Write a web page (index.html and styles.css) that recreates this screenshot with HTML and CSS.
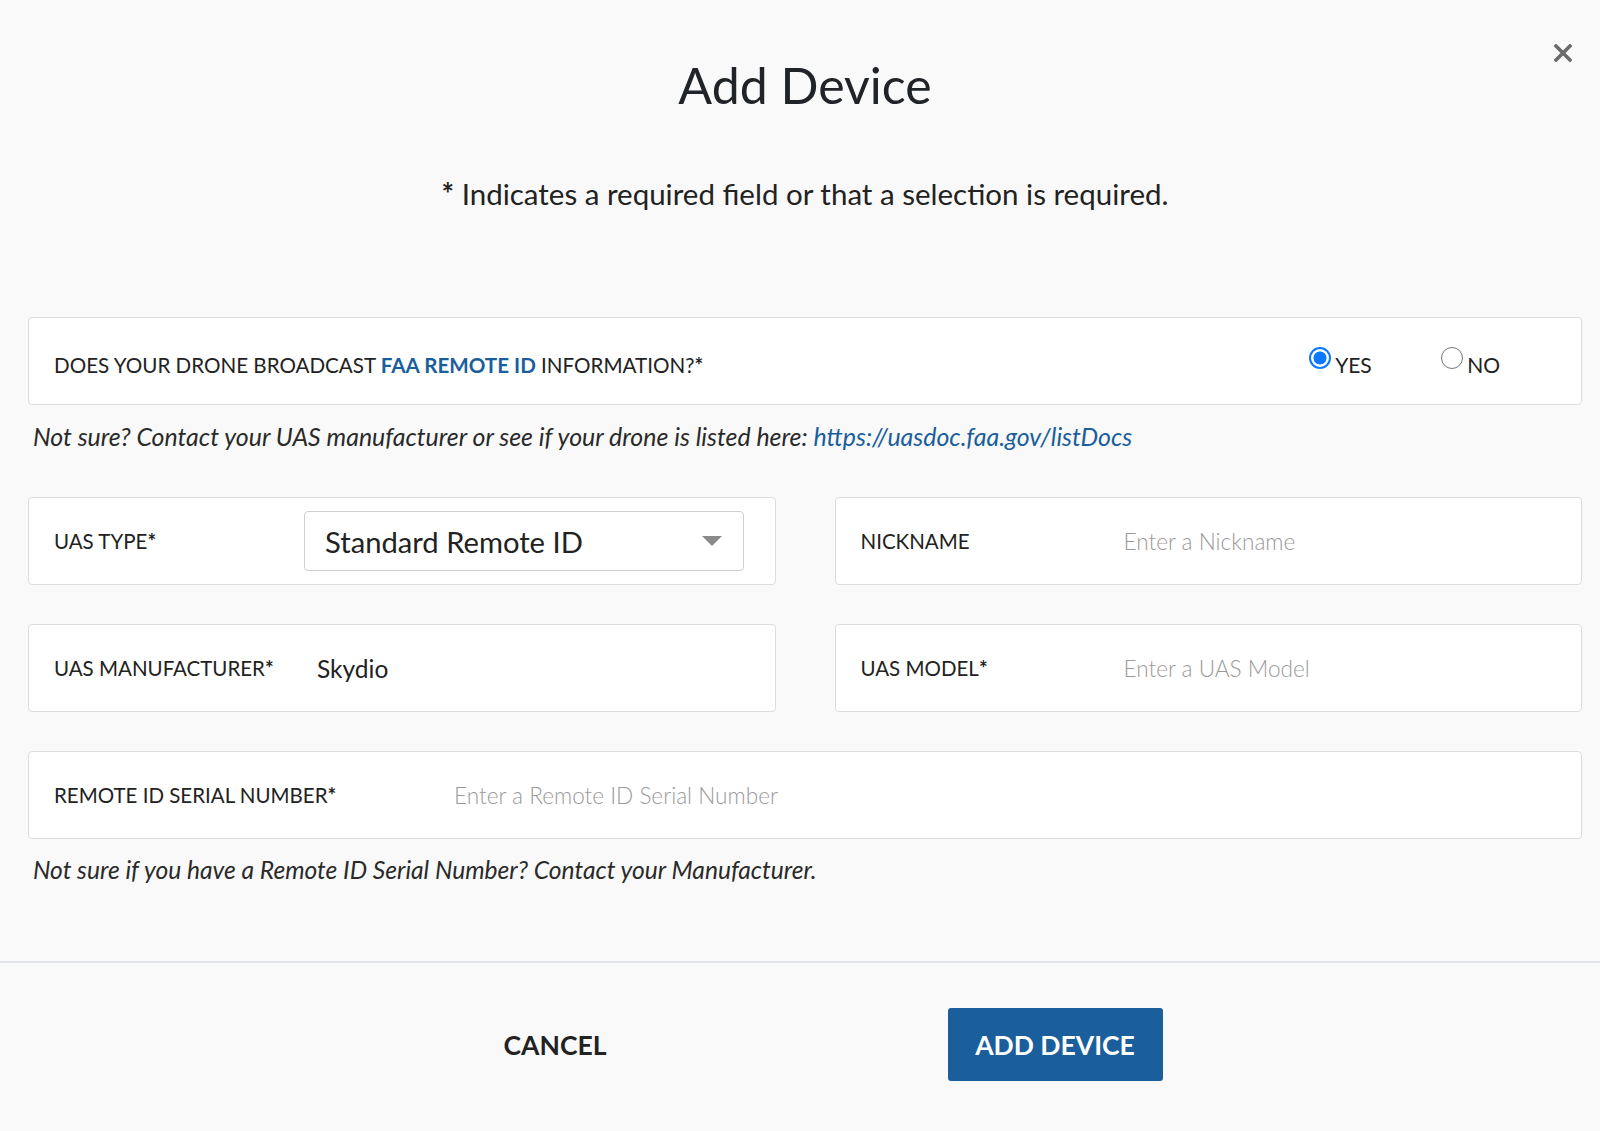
FILE: index.html
```html
<!DOCTYPE html>
<html lang="en">
<head>
<meta charset="utf-8">
<title>Add Device</title>
<link rel="stylesheet" href="styles.css">
</head>
<body>
<div class="modal">
  <button class="close" aria-label="Close">
    <svg width="18" height="18" viewBox="0 0 18 18"><path d="M2 2 L16 16 M16 2 L2 16" stroke="#6b6b6b" stroke-width="3.6" stroke-linecap="square"/></svg>
  </button>
  <div class="content">
    <h1 class="title">Add Device</h1>
    <p class="note"><b class="req">*</b> Indicates a required field or that a selection is required.</p>

    <div class="card card-question">
      <span class="label label-question">DOES YOUR DRONE BROADCAST <a class="strong-link" href="#">FAA REMOTE ID</a> INFORMATION?<b class="req">*</b></span>
      <div class="radios">
        <label class="radio"><input type="radio" name="rid" checked><span>YES</span></label>
        <label class="radio radio-no"><input type="radio" name="rid"><span>NO</span></label>
      </div>
    </div>
    <p class="help">Not sure? Contact your UAS manufacturer or see if your drone is listed here: <a class="link" href="#">https://uasdoc.faa.gov/listDocs</a></p>

    <div class="grid">
      <div class="card">
        <span class="label label-half">UAS TYPE<b class="req">*</b></span>
        <div class="select">
          <span>Standard Remote ID</span>
          <svg class="caret" width="20" height="10" viewBox="0 0 20 10"><path d="M0 0 H20 L10 10 Z" fill="#8a8a8a"/></svg>
        </div>
      </div>
      <div class="card">
        <span class="label label-half">NICKNAME</span>
        <span class="value placeholder">Enter a Nickname</span>
      </div>
      <div class="card">
        <span class="label label-half">UAS MANUFACTURER<b class="req">*</b></span>
        <span class="value">Skydio</span>
      </div>
      <div class="card">
        <span class="label label-half">UAS MODEL<b class="req">*</b></span>
        <span class="value placeholder">Enter a UAS Model</span>
      </div>
    </div>

    <div class="card card-full">
      <span class="label label-wide">REMOTE ID SERIAL NUMBER<b class="req">*</b></span>
      <span class="value placeholder">Enter a Remote ID Serial Number</span>
    </div>
    <p class="help help-last">Not sure if you have a Remote ID Serial Number? Contact your Manufacturer.</p>
  </div>

  <div class="divider"></div>

  <div class="footer">
    <button class="btn btn-cancel">CANCEL</button>
    <button class="btn btn-primary">ADD DEVICE</button>
  </div>
</div>
</body>
</html>
```
FILE: styles.css
```css
* { box-sizing: border-box; }
html, body {
  margin: 0;
  padding: 0;
  background: #f9f9f9;
}
body {
  font-family: Lato, "Open Sans", Arial, sans-serif;
  color: #222;
}
.modal {
  position: relative;
  min-height: 1131px;
}
.close {
  position: absolute;
  top: 44px;
  left: 1554px;
  background: none;
  border: 0;
  padding: 0;
  width: 18px;
  height: 18px;
  cursor: pointer;
}
.close svg { display: block; }
.content {
  padding: 0 18px 0 28px;
}
.title {
  margin: 0;
  padding-top: 55px;
  font-size: 50px;
  line-height: 60px;
  font-weight: 400;
  text-align: center;
  color: #202328;
}
.note {
  margin: 61px 0 0;
  font-size: 29.5px;
  line-height: 36px;
  text-align: center;
  color: #222;
}
.req { font-weight: 700; }
.card {
  background: #fff;
  border: 1px solid #dcdcdc;
  border-radius: 4px;
  height: 88px;
  display: flex;
  align-items: center;
  padding: 0 31px 0 25px;
}
.card-question {
  margin-top: 105px;
  justify-content: space-between;
  padding-right: 81px;
}
.label {
  font-size: 20.5px;
  color: #222;
  flex: none;
}
.label-question {
  font-size: 20.6px;
  padding-top: 7px;
}
.label-half { width: 250px; }
.label-wide { width: 387px; }
.strong-link {
  color: #1a5e9c;
  font-weight: 700;
  text-decoration: none;
}
.radios {
  display: flex;
  align-items: center;
}
.radio {
  display: flex;
  align-items: center;
  font-size: 21px;
  width: 132px;
}
.radio-no { width: auto; }
.radio input {
  appearance: none;
  -webkit-appearance: none;
  margin: 0 4px 6px 0;
  width: 22px;
  height: 22px;
  border-radius: 50%;
  border: 1.6px solid #767676;
  background: #fff;
  flex: none;
}
.radio input:checked {
  border: 2.5px solid #0b78ff;
  background: radial-gradient(circle, #0b78ff 0 6.2px, #fff 6.8px);
}
.radio span { padding-top: 6px; color: #222; }
.help {
  margin: 16px 0 0;
  padding-left: 5px;
  font-size: 24.9px;
  line-height: 30px;
  font-style: italic;
  color: #2a2a2a;
}
.help-last { font-size: 24.6px; }
.link {
  color: #1a5e9c;
  text-decoration: none;
}
.grid {
  margin-top: 46px;
  display: grid;
  grid-template-columns: 1fr 1fr;
  column-gap: 59px;
  row-gap: 39px;
}
.value {
  font-size: 24.5px;
  padding-left: 13px;
  color: #222;
}
.placeholder {
  color: #9a9a9a;
  font-size: 22.6px;
  font-weight: 300;
}
.select {
  flex: 1;
  height: 60px;
  border: 1px solid #cfcfcf;
  border-radius: 4px;
  display: flex;
  align-items: center;
  justify-content: space-between;
  padding: 0 21px 0 20px;
  font-size: 29.2px;
  color: #222;
}
.caret { display: block; }
.card-full { margin-top: 39px; }
.divider {
  margin-top: 76px;
  height: 2px;
  background: #dfe2e6;
}
.footer {
  padding: 45px 18px 0 28px;
  display: flex;
  justify-content: center;
  gap: 285px;
}
.btn {
  width: 215px;
  height: 73px;
  border: 0;
  border-radius: 3px;
  font-family: Lato, "Open Sans", Arial, sans-serif;
  font-size: 26.5px;
  font-weight: 700;
  cursor: pointer;
}
.btn-cancel {
  background: transparent;
  color: #222;
}
.btn-primary {
  background: #1a5f9b;
  color: #fff;
}
```
